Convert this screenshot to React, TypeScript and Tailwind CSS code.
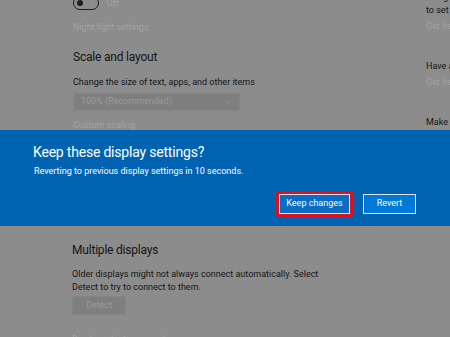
import { FiChevronDown } from 'react-icons/fi';

const font = { fontFamily: 'Roboto, "Noto Sans", sans-serif' };

export default function App() {
  return (
    <div
      className="w-[450px] h-[337px] overflow-hidden bg-[#8c8c8c] flex flex-col text-[#151515]"
      style={font}
    >
      {/* Settings page above the banner */}
      <div className="h-[130px] shrink-0 flex overflow-hidden">
        <div className="w-[426px] shrink-0 pl-[73px] flex flex-col">
          <div className="flex items-center gap-[7px] -mt-[4px] h-[14px]">
            <div className="w-[26px] h-[14px] rounded-full border-[1.5px] border-[#1e1e1e] flex items-center pl-[3px]">
              <div className="w-[6px] h-[6px] rounded-full bg-[#1e1e1e]" />
            </div>
            <span className="text-[9.5px] text-[#a3a3a3]">Off</span>
          </div>
          <div className="mt-[11px] text-[9px] leading-[13px] text-[#a3a3a3]">Night light settings</div>
          <div className="mt-[15px] text-[12px] leading-[17px] tracking-[-0.2px]">Scale and layout</div>
          <div className="mt-[10px] text-[9px] leading-[13px]">Change the size of text, apps, and other items</div>
          <div className="mt-[4px] w-[167px] h-[18px] shrink-0 bg-[#7f7f7f] border border-[#858585] flex items-center justify-between pl-[7px] pr-[6px]">
            <span className="text-[9px] text-[#9b9b9b]">100% (Recommended)</span>
            <FiChevronDown className="text-[#9b9b9b]" size={10} />
          </div>
          <div className="mt-[8px] text-[9px] leading-[13px] text-[#a3a3a3]">Custom scaling</div>
        </div>
        <div className="flex-1 min-w-0 flex flex-col whitespace-nowrap text-[9px] leading-[13px] -mt-[9px]">
          <div>at high temperatures</div>
          <div>to set it up</div>
          <div className="mt-[3px] text-[#a3a3a3]">Get help</div>
          <div className="mt-[27px]">Have a question?</div>
          <div className="mt-[3px] text-[#a3a3a3]">Get help</div>
          <div className="mt-[27px]">Make Windows better</div>
        </div>
      </div>

      {/* Keep these display settings banner */}
      <div className="h-[96px] shrink-0 bg-[#0063b1] text-white pl-[33px] pr-[34px] flex flex-col">
        <div className="mt-[12px] text-[14px] leading-[20px] tracking-[-0.2px]">Keep these display settings?</div>
        <div className="mt-[3px] text-[9px] leading-[13px] pl-[1px]">
          Reverting to previous display settings in 10 seconds.
        </div>
        <div className="mt-[13px] flex justify-end items-center gap-[10px]">
          <div className="rounded-[3px] border-[3px] border-[#e0101e]">
            <button className="h-[20px] w-[71px] border-[1.5px] border-[#d9e6f3] bg-[#0a6cc2] text-[9px] text-white flex items-center justify-center">
              Keep changes
            </button>
          </div>
          <button className="h-[20px] w-[53px] border-[1.5px] border-[#d9e6f3] bg-[#0078d7] text-[9px] text-white flex items-center justify-center">
            Revert
          </button>
        </div>
      </div>

      {/* Settings page below the banner */}
      <div className="pl-[72px] flex flex-col">
        <div className="mt-[16px] text-[12px] leading-[17px] tracking-[-0.2px]">Multiple displays</div>
        <div className="mt-[9px] text-[9px] leading-[13px] w-[250px]">
          Older displays might not always connect automatically. Select Detect to try to connect to them.
        </div>
        <div className="mt-[2px] w-[54px] h-[19px] shrink-0 bg-[#7f7f7f] border border-[#858585] flex items-center justify-center text-[9px] text-[#9b9b9b]">
          Detect
        </div>
        <div className="mt-[18px] text-[9px] leading-[13px] text-[#a3a3a3]">Display adapter properties</div>
      </div>
    </div>
  );
}
